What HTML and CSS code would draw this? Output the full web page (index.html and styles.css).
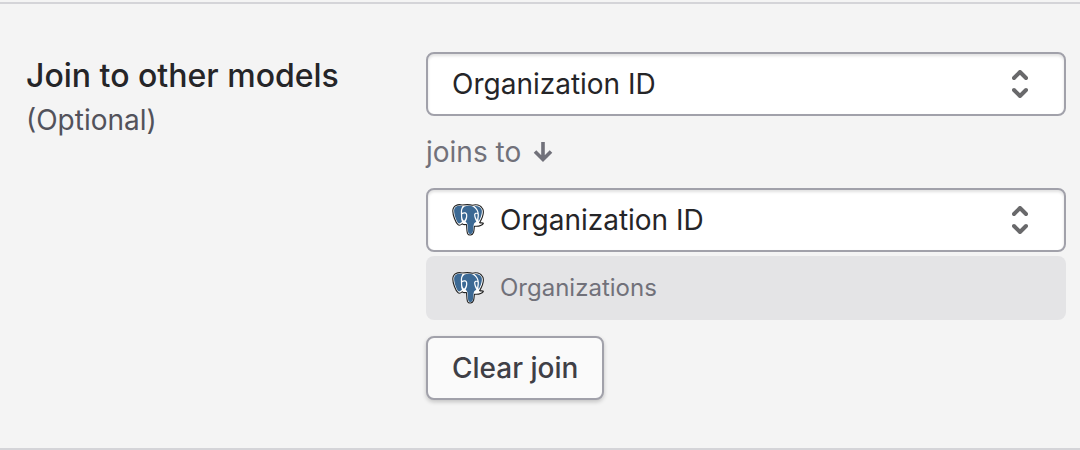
FILE: index.html
```html
<!DOCTYPE html>
<html lang="en">
  <head>
    <meta charset="UTF-8" />
    <meta name="viewport" content="width=device-width, initial-scale=1.0" />
    <title>Join to other models</title>
    <link rel="stylesheet" href="styles.css">
  </head>
  <body>
    <svg class="sprite" aria-hidden="true">
      <symbol id="postgres" viewBox="0 0 32 32">
        <!-- outline -->
        <path d="M10 1C6 -.1 .9 1.500 .8 7C.8 11 3.500 18.500 6 20.700C7.500 22 9 20.800 10.300 19.800C11.300 20.900 13 20.600 14.500 20.500C14.900 23.500 14.600 27 15.500 29.500C16.700 31.800 20.300 31.600 21.500 28.500C22.200 26.500 22 24 22.500 22.200C25.500 22.500 29.500 22 31.300 19.700C31.500 18.700 29.500 19.100 27.600 18.700C29.500 15.500 32.300 9 30.900 5.300C28.500 .5 23.500 .3 20.500 1.200C17 .3 13.500 .5 10 1Z" fill="#fff" stroke="#222" stroke-width="1.100" stroke-linejoin="round" />
        <g fill="#3c6994">
          <!-- ears -->
          <path d="M10.500 2.300C6 .9 2.200 2.500 2.100 7C2.200 11 4.500 17.500 6.500 19.300C7.500 20.200 8.900 18.500 10 17.500C8.600 15 9.200 12.500 8.900 10C8.700 7 8.900 4.300 10.500 2.300Z" />
          <path d="M22.300 2C25.500 1.500 28.500 2.600 29.700 5.700C30.500 8.500 28.800 14 26.700 17.200C26 15.500 27 13.500 26.900 10.500C26.700 7 25 4 22.300 2Z" />
          <!-- face and trunk -->
          <path d="M12.600 2.500C15 1.600 19 1.600 21 2.800C23.800 4.500 25.300 6.800 25.400 9C24 8.600 22.300 8.900 22.100 10.500C22 13 23.200 15.500 24.300 17.700C22.400 18.300 21.800 20 21.500 22C21.200 24.500 21.400 27 20.500 28.700C19.600 30.400 17.200 30.400 16.400 28.700C15.600 26.500 15.900 23.500 15.600 21C15.400 19.400 14.300 18.600 13.600 17.800C14.900 15.500 15.600 13 15.200 10.500C14.800 8 12 7.900 10 8.800C9.900 6 10.500 3.900 12.600 2.500Z" />
          <path d="M10.200 10.300C11.500 9.300 13.700 9.200 14 10.700C14.400 13 13.500 15 12 16.700C10.200 15.200 10 13 10.200 10.300Z" />
          <path d="M23.300 10.500C23.600 9.700 24.700 9.600 25.600 10.200C25.800 12.200 25.200 14 25.100 15.700C24 14 23.200 12.300 23.300 10.500Z" />
        </g>
      </symbol>
      <symbol id="sort" viewBox="0 0 16 28">
        <path d="M2 8L8 2L14 8M2 20L8 26L14 20" fill="none" stroke="currentColor" stroke-width="4" stroke-linecap="round" stroke-linejoin="round" />
      </symbol>
    </svg>

    <section class="join-row">
      <div class="heading">
        <h2>Join to other models</h2>
        <p>(Optional)</p>
      </div>

      <div class="fields">
        <div class="select-wrap">
          <select class="select" aria-label="Join from column">
            <option>Organization ID</option>
          </select>
          <svg class="sort-icon"><use href="#sort" /></svg>
        </div>

        <div class="joins-to">
          <span>joins to</span>
          <svg class="arrow" viewBox="0 0 20 24">
            <path d="M10 2V20M2 11.500L10 19.500L18 11.500" fill="none" stroke="currentColor" stroke-width="3.600" />
          </svg>
        </div>

        <div class="select-wrap">
          <svg class="source-icon"><use href="#postgres" /></svg>
          <select class="select with-icon" aria-label="Join to column">
            <option>Organization ID</option>
          </select>
          <svg class="sort-icon"><use href="#sort" /></svg>
        </div>

        <div class="model">
          <svg class="model-icon"><use href="#postgres" /></svg>
          <span>Organizations</span>
        </div>

        <button type="button" class="clear">Clear join</button>
      </div>
    </section>
  </body>
</html>
```
FILE: styles.css
```css
* {
  box-sizing: border-box;
}

body {
  margin: 0;
  padding-top: 2px;
  background: #f4f4f4;
  color: #252528;
  font-family: Inter, sans-serif;
  font-size: 28px;
  line-height: 40px;
}

.sprite {
  position: absolute;
  width: 0;
  height: 0;
}

.join-row {
  display: grid;
  grid-template-columns: 5fr 8fr;
  padding: 48px 14px 48px 26px;
  border-top: 2px solid #d4d4d8;
  border-bottom: 2px solid #d4d4d8;
}

.heading {
  padding-top: 4px;
}

.heading h2 {
  margin: 0;
  font-size: 32px;
  font-weight: 550;
}

.heading p {
  margin: 4px 0 0;
  color: #52525b;
}

.select-wrap {
  position: relative;
}

.select {
  display: block;
  width: 100%;
  height: 64px;
  padding: 0 64px 0 24px;
  border: 2px solid #a1a1aa;
  border-radius: 8px;
  background: #fff;
  box-shadow: inset 0 2px 3px rgba(0, 0, 0, 0.12);
  color: #252528;
  font: inherit;
  appearance: none;
}

.select.with-icon {
  padding-left: 72px;
}

.source-icon {
  position: absolute;
  top: 16px;
  left: 26px;
  width: 32px;
  height: 32px;
}

.sort-icon {
  position: absolute;
  top: 18px;
  right: 38px;
  width: 16px;
  height: 28px;
  color: #69696b;
  pointer-events: none;
}

.joins-to {
  display: flex;
  align-items: center;
  gap: 12px;
  height: 72px;
  color: #71717a;
}

.arrow {
  width: 20px;
  height: 24px;
}

.model {
  display: flex;
  align-items: center;
  gap: 16px;
  height: 64px;
  margin-top: 4px;
  padding: 0 26px;
  border-radius: 8px;
  background: #e4e4e6;
  color: #71717a;
  font-size: 24px;
}

.model-icon {
  width: 32px;
  height: 32px;
}

.clear {
  display: block;
  height: 64px;
  margin-top: 16px;
  padding: 0 24px;
  border: 2px solid #a1a1aa;
  border-radius: 8px;
  background: #fafafa;
  box-shadow: 0 2px 4px rgba(0, 0, 0, 0.2);
  color: #3f3f46;
  font: inherit;
  font-weight: 500;
}
```
